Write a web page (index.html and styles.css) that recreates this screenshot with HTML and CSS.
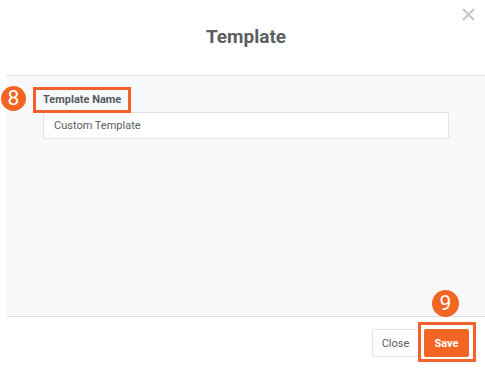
FILE: index.html
```html
<!DOCTYPE html>
<html>
<head>
<meta charset="utf-8">
<link rel="stylesheet" href="styles.css">
</head>
<body>
<div class="page">
  <div class="modal">
    <div class="header">
      <h1 class="title">Template</h1>
      <button class="x-btn" aria-label="Close">
        <svg width="13" height="13" viewBox="0 0 13 13"><path d="M1 1L12 12M12 1L1 12" stroke="#c8c8c8" stroke-width="2.2"/></svg>
      </button>
    </div>
    <div class="body">
      <div class="field-label">
        <span class="label-text">Template Name</span>
        <span class="hl hl-label"></span>
      </div>
      <div class="input">Custom Template</div>
    </div>
    <div class="footer">
      <button class="btn btn-close">Close</button>
      <div class="save-wrap">
        <button class="btn btn-save">Save</button>
        <span class="hl hl-save"></span>
      </div>
    </div>
  </div>
  <span class="badge badge-8">8</span>
  <span class="badge badge-9">9</span>
</div>
</body>
</html>
```
FILE: styles.css
```css
* { box-sizing: border-box; }
html, body { margin: 0; padding: 0; background: #fff; }
body { font-family: Roboto, "Liberation Sans", Arial, sans-serif; }
.page { position: relative; width: 485px; height: 368px; overflow: hidden; }
.modal { margin-left: 7px; height: 368px; display: flex; flex-direction: column; background: #fff; }
.header { position: relative; height: 76px; border-bottom: 1px solid #e2e3e5; display: flex; align-items: center; justify-content: center; }
.title { margin: 0; font-size: 19px; font-weight: 700; color: #5b5f64; line-height: 22px; padding-bottom: 1px; }
.x-btn { position: absolute; top: 8px; right: 10px; width: 13px; height: 13px; padding: 0; border: 0; background: none; display: flex; }
.body { height: 241px; background: #f8f9fb; padding: 17px 36px 0 36px; border-bottom: 1px solid #dcdddf; display: flex; flex-direction: column; align-items: flex-start; }
.field-label { position: relative; margin-bottom: 5px; }
.label-text { display: block; font-size: 11px; font-weight: 700; color: #555a5f; line-height: 14px; }
.hl { position: absolute; border: 3px solid #f2622a; pointer-events: none; }
.hl-label { left: -10px; top: -6px; right: -10px; bottom: -6px; }
.input { align-self: stretch; height: 27px; background: #fff; border: 1px solid #e1e2e4; border-radius: 2px; padding: 0 10px; font-size: 11px; line-height: 25px; color: #5a5e63; }
.footer { flex: 1; display: flex; justify-content: flex-end; align-items: flex-start; gap: 5px; padding: 12px 16px 0 0; }
.btn { height: 28px; border-radius: 2px; font-family: inherit; padding: 0; cursor: pointer; }
.btn-close { width: 47px; background: #fff; border: 1px solid #e1e2e4; font-size: 11px; color: #5a5e63; }
.save-wrap { position: relative; }
.btn-save { width: 45px; background: #f26522; border: 0; color: #fff; font-size: 11px; font-weight: 700; }
.hl-save { left: -6px; top: -7px; right: -7px; bottom: -5px; }
.badge { position: absolute; border-radius: 50%; background: #f26522; color: #fff; display: flex; align-items: center; justify-content: center; font-size: 21px; line-height: 1; }
.badge-8 { left: 1px; top: 86px; width: 25px; height: 25px; }
.badge-9 { left: 432px; top: 290px; width: 27px; height: 27px; }
```
